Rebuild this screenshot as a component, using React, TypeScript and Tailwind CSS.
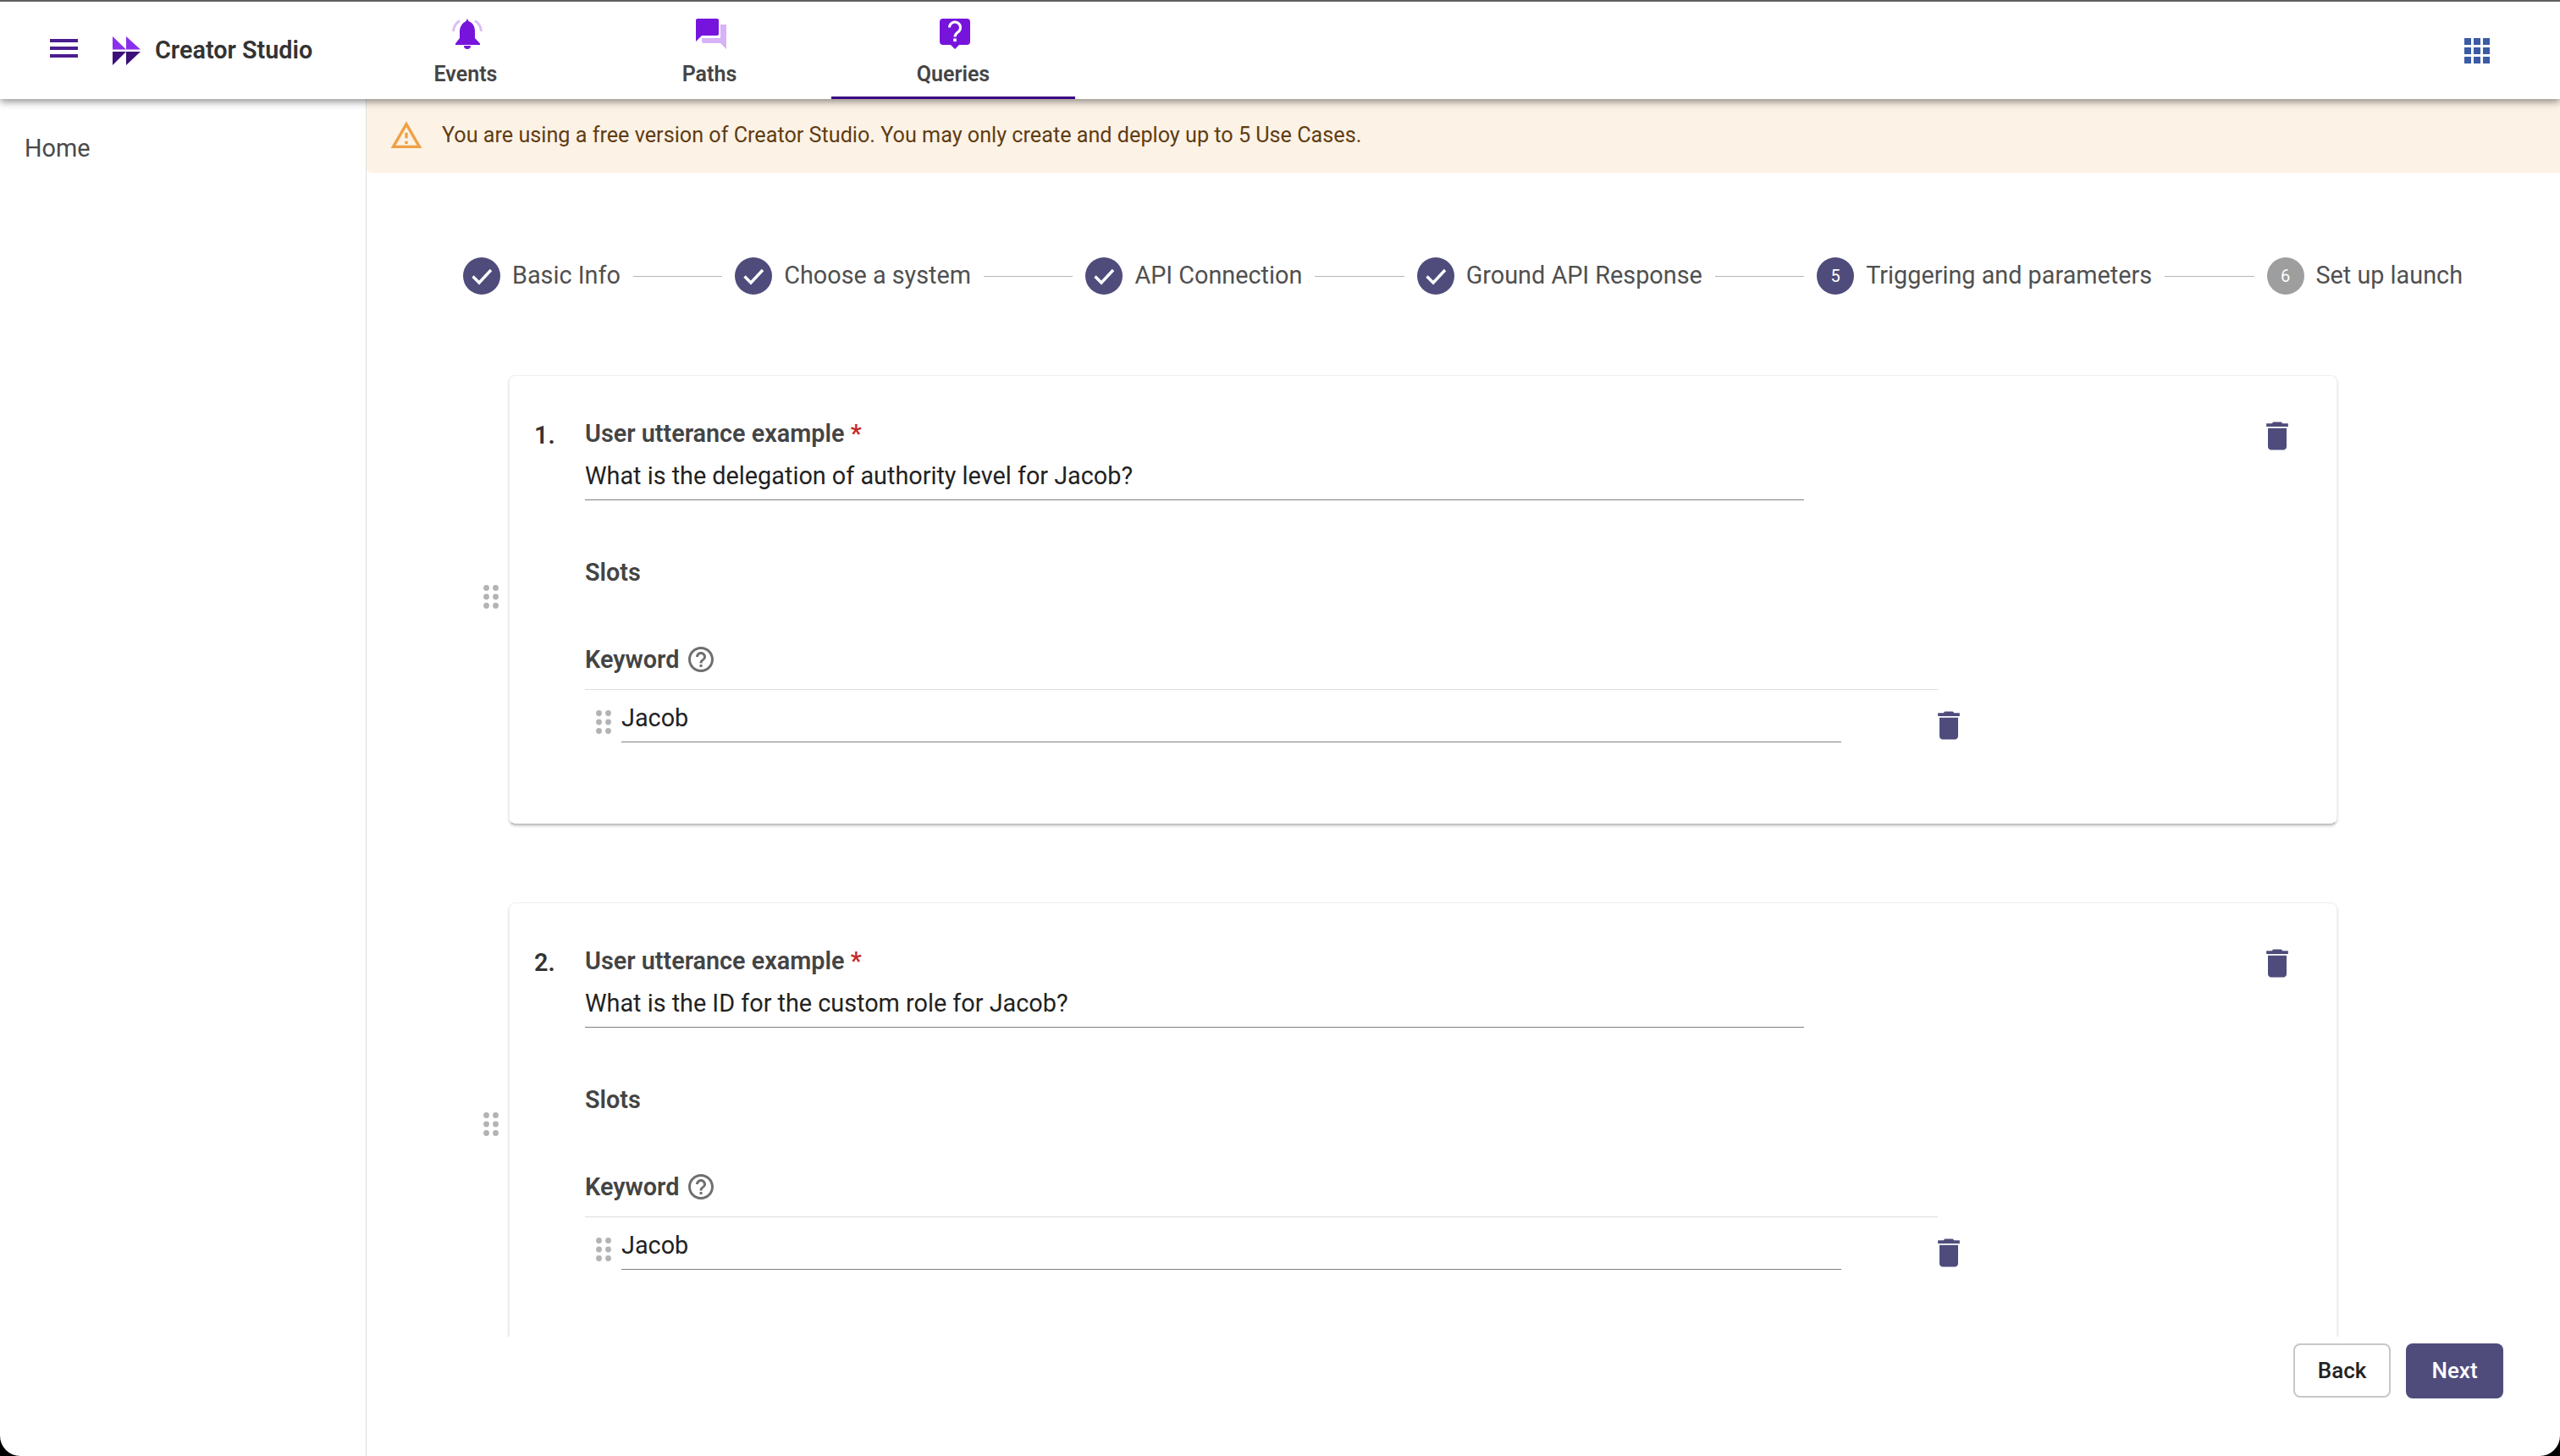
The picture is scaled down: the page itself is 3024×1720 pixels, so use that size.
import React from "react";

const Grip = ({ className = "" }: { className?: string }) => (
  <svg className={className} width="18" height="28" viewBox="0 0 18 28" fill="#b3b3b3">
    {[3.5, 14, 24.5].map((cy) => (
      <React.Fragment key={cy}>
        <circle cx="3.5" cy={cy} r="3.4" />
        <circle cx="14.5" cy={cy} r="3.4" />
      </React.Fragment>
    ))}
  </svg>
);

const Trash = () => (
  <svg width="44" height="44" viewBox="0 0 24 24" fill="#4f4c7c">
    <path d="M6 19c0 1.1.9 2 2 2h8c1.1 0 2-.9 2-2V7H6v12zM19 4h-3.5l-1-1h-5l-1 1H5v2h14V4z" />
  </svg>
);

const Help = () => (
  <svg width="36" height="36" viewBox="0 0 24 24" fill="#6f6f6f">
    <path d="M11 18h2v-2h-2v2zm1-16C6.48 2 2 6.48 2 12s4.48 10 10 10 10-4.48 10-10S17.52 2 12 2zm0 18c-4.41 0-8-3.59-8-8s3.59-8 8-8 8 3.59 8 8-3.59 8-8 8zm0-14c-2.21 0-4 1.79-4 4h2c0-1.1.9-2 2-2s2 .9 2 2c0 2-3 1.75-3 5h2c0-2.25 3-2.5 3-5 0-2.21-1.79-4-4-4z" />
  </svg>
);

const Bell = () => (
  <svg width="36" height="36" viewBox="0 0 36 36">
    <path d="M1.5 15C2 9 5 5 9 2.5M34.5 15C34 9 31 5 27 2.5" stroke="#dcbdf5" strokeWidth="3" fill="none" />
    <path d="M18 0l1.5 3C25 5 27 10 27 15v8l6 6.5V31H4v-1.5L9 23v-8c0-5 3-10 7.5-12z" fill="#7614dc" />
    <path d="M14 32h8a4 4 0 0 1-8 0z" fill="#7614dc" />
  </svg>
);

const PathsIcon = () => (
  <svg width="36" height="36" viewBox="0 0 36 36">
    <path d="M29 7h7v29l-7-7H9a2 2 0 0 1-2-2v-4h22z" fill="#d5b3f6" />
    <path d="M2 0h23a2 2 0 0 1 2 2v16a2 2 0 0 1-2 2H7l-7 7V2a2 2 0 0 1 2-2z" fill="#7614dc" />
  </svg>
);

const QueriesIcon = () => (
  <svg width="36" height="36" viewBox="0 0 36 36">
    <path d="M4 0h28a4 4 0 0 1 4 4v23a4 4 0 0 1-4 4h-9l-5 5-5-5H4a4 4 0 0 1-4-4V4a4 4 0 0 1 4-4z" fill="#7614dc" />
    <path d="M11.5 10.5a6.5 6.5 0 1 1 10 5.5c-2 1.400-3.500 2.500-3.500 5.500" stroke="#fff" strokeWidth="3" fill="none" />
    <rect x="16.200" y="23.500" width="3.600" height="3.600" fill="#fff" />
  </svg>
);

const Logo = () => (
  <svg width="34" height="34" viewBox="0 0 34 34">
    <path d="M0 0v15.500h16zM16 0v15.500h17z" fill="#8a2fec" />
    <path d="M0 18h16L0 34zM16 18h17L16 34z" fill="#3d0f7a" />
  </svg>
);

const Check = () => (
  <svg width="44" height="44" viewBox="0 0 44 44" fill="none">
    <circle cx="22" cy="22" r="22" fill="#4f4c7c" />
    <path d="M11.500 22.500l7.500 7.500 14-15" stroke="#fff" strokeWidth="3.400" />
  </svg>
);

const Step = ({ n, label, done, muted }: { n: number; label: string; done?: boolean; muted?: boolean }) => (
  <div className="flex items-center gap-[14px] shrink-0">
    {done ? (
      <Check />
    ) : (
      <div
        className={`w-[44px] h-[44px] rounded-full flex items-center justify-center text-white text-[20px] ${
          muted ? "bg-[#9e9e9e]" : "bg-[#4f4c7c]"
        }`}
      >
        {n}
      </div>
    )}
    <span className="text-[28.8px] text-[#505050] whitespace-nowrap">{label}</span>
  </div>
);

const Line = () => <div className="flex-1 h-px bg-[#b5b5b5] mx-[15px]" />;

const Tab = ({ icon, label, active }: { icon: React.ReactNode; label: string; active?: boolean }) => (
  <div
    className={`w-[288px] h-[115px] flex flex-col items-center pt-[20px] border-b-[3px] ${
      active ? "border-[#3b0a82]" : "border-transparent"
    }`}
  >
    <div className="flex ml-[3px]">{icon}</div>
    <span className="mt-[15px] text-[25px] leading-[30px] font-semibold text-[#444444]">{label}</span>
  </div>
);

const Card = ({ n, text }: { n: number; text: string }) => (
  <div className="flex items-center shrink-0">
    <div className="w-[32px] pl-[2px] mb-[8px]">
      <Grip />
    </div>
    <div className="w-[2160px] h-[531px] rounded-[8px] bg-white border border-[#f0f0f0] border-b-[#b5b5b5] shadow-[0_2px_3px_rgba(0,0,0,0.2)] flex pl-[29px] pr-[48px] pt-[48px]">
      <div className="w-[60px] text-[28.8px] leading-[40px] font-semibold text-[#333333] pt-[2px]">{n}.</div>
      <div className="flex-1">
        <div className="text-[28.8px] leading-[40px] font-semibold text-[#444444]">
          User utterance example <span className="text-[#c62828]">*</span>
        </div>
        <div className="w-[1440px] h-[57px] mt-[2px] border-b border-[#808080] text-[28.8px] leading-[48px] pt-[4px] text-[#222222]">
          {text}
        </div>
        <div className="mt-[65px] text-[28.8px] leading-[40px] font-semibold text-[#444444]">Slots</div>
        <div className="mt-[63px] flex items-center gap-[8px] text-[28.8px] leading-[40px] font-semibold text-[#444444]">
          Keyword <Help />
        </div>
        <div className="w-[1598px] h-px bg-[#dcdcdc] mt-[15px]" />
        <div className="flex items-start">
          <div className="w-[1625px] flex items-start">
            <Grip className="ml-[13px] mt-[24px] mr-[12px] shrink-0" />
            <div className="w-[1441px] h-[62px] border-b border-[#808080] text-[28.8px] leading-[40px] pt-[13px] text-[#222222]">
              Jacob
            </div>
          </div>
          <div className="mt-[20px] -ml-[36px]">
            <Trash />
          </div>
        </div>
      </div>
      <div className="mt-[1px]">
        <Trash />
      </div>
    </div>
  </div>
);

export default function App() {
  return (
    <div className="w-[3024px] h-[1720px] bg-black font-['Roboto',sans-serif]">
      <div className="w-full h-full bg-white rounded-b-[24px] overflow-hidden flex flex-col">
        <header className="relative z-10 h-[117px] shrink-0 bg-white border-t-2 border-[#5f5f63] shadow-[0_3px_9px_rgba(0,0,0,0.45)] flex items-start">
          <div className="w-[406px] h-full flex items-center pl-[59px] pb-[2px]">
            <div className="w-[33px] flex flex-col gap-[5px] mb-[3px]">
              <div className="h-[4px] bg-[#4c1d8f]" />
              <div className="h-[4px] bg-[#4c1d8f]" />
              <div className="h-[4px] bg-[#4c1d8f]" />
            </div>
            <div className="ml-[41px] mt-[2px] flex">
              <Logo />
            </div>
            <span className="ml-[16px] mt-[2px] text-[28.8px] font-semibold text-[#333333] whitespace-nowrap">Creator Studio</span>
          </div>
          <Tab icon={<Bell />} label="Events" />
          <Tab icon={<PathsIcon />} label="Paths" />
          <Tab icon={<QueriesIcon />} label="Queries" active />
          <div className="flex-1 flex justify-end pr-[83px] pt-[43px]">
            <div className="grid grid-cols-3 gap-[3px]">
              {Array.from({ length: 9 }).map((_, i) => (
                <div key={i} className="w-[8px] h-[8px] bg-[#3b5ba5]" />
              ))}
            </div>
          </div>
        </header>
        <div className="flex-1 flex min-h-0">
          <aside className="w-[433px] shrink-0 border-r border-[#dcdcdc] pl-[29px] pt-[38px] text-[28.8px] leading-[40px] text-[#4a4a4a]">
            Home
          </aside>
          <main className="flex-1 flex flex-col min-w-0">
            <div className="h-[87px] shrink-0 bg-[#fdf2e6] rounded-bl-[6px] flex items-center pl-[27px] pb-[2px] gap-[22px]">
              <svg width="40" height="40" viewBox="0 0 24 24" fill="#efa044">
                <path d="M12 5.990L19.530 19H4.470L12 5.990M12 2L1 21h22L12 2zm1 14h-2v2h2v-2zm0-6h-2v4h2v-4z" />
              </svg>
              <span className="text-[25.2px] text-[#5f3d12] whitespace-nowrap">
                You are using a free version of Creator Studio. You may only create and deploy up to 5 Use Cases.
              </span>
            </div>
            <div className="flex items-center pl-[114px] pr-[115px] pt-[100px] h-[144px] shrink-0 pb-0">
              <Step n={1} label="Basic Info" done />
              <Line />
              <Step n={2} label="Choose a system" done />
              <Line />
              <Step n={3} label="API Connection" done />
              <Line />
              <Step n={4} label="Ground API Response" done />
              <Line />
              <Step n={5} label="Triggering and parameters" />
              <Line />
              <Step n={6} label="Set up launch" muted />
            </div>
            <div className="flex-1 min-h-0 overflow-hidden flex flex-col gap-[92px] pl-[136px] pt-[95px]">
              <Card n={1} text="What is the delegation of authority level for Jacob?" />
              <Card n={2} text="What is the ID for the custom role for Jacob?" />
            </div>
            <div className="h-[141px] shrink-0 flex justify-end gap-[18px] pr-[67px] pt-[8px] items-start">
              <button className="w-[115px] h-[64px] rounded-[8px] border-2 border-[#c8c8c8] bg-white text-[26px] font-medium text-[#222222]">
                Back
              </button>
              <button className="w-[115px] h-[65px] rounded-[8px] bg-[#4f4c7c] text-[26px] font-medium text-white">
                Next
              </button>
            </div>
          </main>
        </div>
      </div>
    </div>
  );
}
